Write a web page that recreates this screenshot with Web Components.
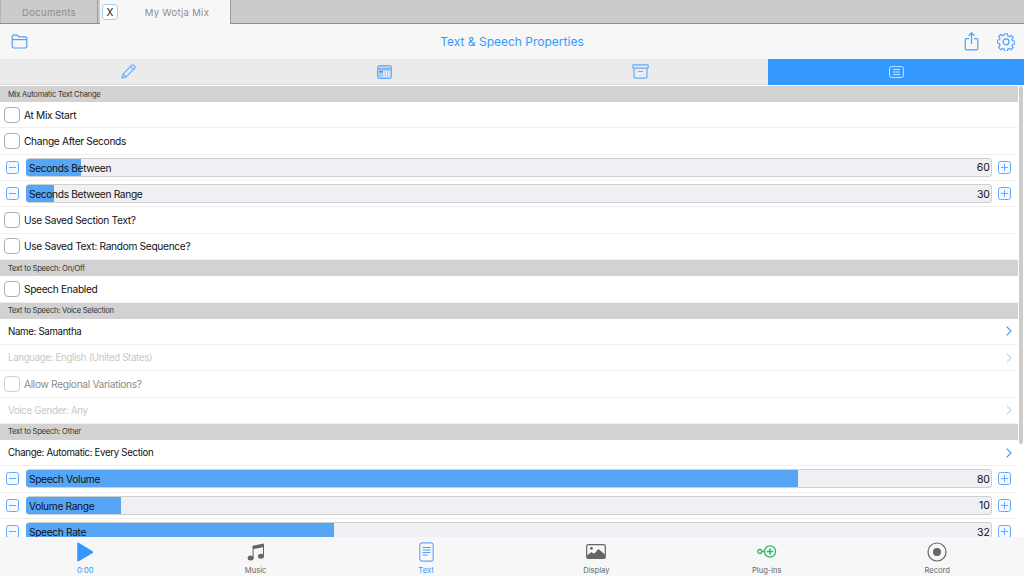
<!DOCTYPE html>
<html>
<head>
<meta charset="utf-8">
<title>Text & Speech Properties</title>
<style>
html,body{
    margin: 0;
    padding: 0;
    height: 100%;
    overflow: hidden;
    font-family: Inter, "Liberation Sans", sans-serif;
    background: #fff;
}
wm-app{
    height: 576px;
}
</style>
</head>
<body>
<wm-app>
    <wm-tabs slot="top"></wm-tabs>
    <wm-toolbar slot="top" title="Text &amp; Speech Properties"></wm-toolbar>
    <wm-segments slot="top"></wm-segments>

    <wm-section>Mix Automatic Text Change</wm-section>
    <wm-check>At Mix Start</wm-check>
    <wm-check>Change After Seconds</wm-check>
    <wm-slider label="Seconds Between" value="60" fill="55"></wm-slider>
    <wm-slider label="Seconds Between Range" value="30" fill="28"></wm-slider>
    <wm-check>Use Saved Section Text?</wm-check>
    <wm-check>Use Saved Text: Random Sequence?</wm-check>
    <wm-section>Text to Speech: On/Off</wm-section>
    <wm-check>Speech Enabled</wm-check>
    <wm-section>Text to Speech: Voice Selection</wm-section>
    <wm-link>Name: Samantha</wm-link>
    <wm-link disabled>Language: English (United States)</wm-link>
    <wm-check disabled>Allow Regional Variations?</wm-check>
    <wm-link disabled>Voice Gender: Any</wm-link>
    <wm-section>Text to Speech: Other</wm-section>
    <wm-link>Change: Automatic: Every Section</wm-link>
    <wm-slider label="Speech Volume" value="80" fill="772"></wm-slider>
    <wm-slider label="Volume Range" value="10" fill="95"></wm-slider>
    <wm-slider label="Speech Rate" value="32" fill="308"></wm-slider>

    <wm-bottom-bar slot="bottom">
        <wm-bottom-item label="0:00" active>
            <svg width="18" height="20" viewBox="0 0 18 20"><path d="M1.2 1.6v16.8c0 .9.8 1.3 1.5.9l14-8.4c.7-.4.7-1.3 0-1.7l-14-8.5C2 .3 1.2.7 1.2 1.6z" fill="#3399ff"/></svg>
        </wm-bottom-item>
        <wm-bottom-item label="Music">
            <svg width="20" height="20" viewBox="0 0 20 20" fill="#666"><ellipse cx="4.6" cy="16" rx="3" ry="2.5"/><ellipse cx="15" cy="14.2" rx="3" ry="2.5"/><path d="M6.6 16V4.2L18 2v12.200h-1V5.200L7.600 7.100V16z"/><path d="M6.600 3.800 18 1.600V3.600L6.600 5.800z"/></svg>
        </wm-bottom-item>
        <wm-bottom-item label="Text" active>
            <svg width="15" height="20" viewBox="0 0 15 20" fill="none"><rect x=".8" y=".8" width="13.4" height="18.4" rx="2.4" stroke="#66aaff" stroke-width="1.2"/><path d="M3.5 5.5h8M3.5 8h8M3.5 10.5h8M3.500 13h5" stroke="#4d9fff" stroke-width="1.1"/></svg>
        </wm-bottom-item>
        <wm-bottom-item label="Display">
            <svg width="20" height="15" viewBox="0 0 20 15" fill="none"><rect x=".7" y=".7" width="18.6" height="13.6" rx="1.4" stroke="#666" stroke-width="1.2"/><circle cx="5.4" cy="4.4" r="1.4" fill="#666"/><path d="M1 14v-2.5L5.5 8l2.5 1.8L12.5 5 19 10.5V14z" fill="#666"/></svg>
        </wm-bottom-item>
        <wm-bottom-item label="Plug-ins">
            <svg width="20" height="13" viewBox="0 0 20 13" fill="none" stroke="#2fb866" stroke-width="1.3"><circle cx="2.8" cy="6.5" r="2"/><path d="M4.8 6.5h2.2"/><circle cx="13" cy="6.5" r="5.6"/><path d="M13 3.2v6.6M9.7 6.5h6.6" stroke-width="1.5"/></svg>
        </wm-bottom-item>
        <wm-bottom-item label="Record">
            <svg width="20" height="20" viewBox="0 0 20 20" fill="none"><circle cx="10" cy="10" r="9" stroke="#666" stroke-width="1.2"/><circle cx="10" cy="10" r="4" fill="#666"/></svg>
        </wm-bottom-item>
    </wm-bottom-bar>
</wm-app>

<script>
const blue = '#3399ff';

class WmApp extends HTMLElement{
    constructor(){
        super();
        this.attachShadow({mode: 'open'}).innerHTML = `
<style>
:host{
    display: flex;
    flex-direction: column;
    width: 1024px;
    overflow: hidden;
}
.list{
    flex: 1;
    min-height: 0;
    overflow: hidden;
    position: relative;
    padding-top: 1px;
}
.bar{
    position: absolute;
    right: 1px;
    top: 1px;
    width: 4px;
    height: 358px;
    border-radius: 2px;
    background: #cccccc;
}
</style>
<slot name="top"></slot>
<div class="list"><slot></slot><div class="bar"></div></div>
<slot name="bottom"></slot>`;
    }
}

class WmTabs extends HTMLElement{
    constructor(){
        super();
        this.attachShadow({mode: 'open'}).innerHTML = `
<style>
:host{
    display: flex;
    height: 24px;
    box-sizing: border-box;
    background: #cbcbcb;
    border-bottom: 1px solid #8e8e8e;
    font-size: 9.5px;
    letter-spacing: .3px;
    color: #8d8d8d;
}
.doc{
    width: 98px;
    display: flex;
    align-items: center;
    justify-content: center;
    border-right: 1px solid #9a9a9a;
    box-sizing: border-box;
    border-left: 1px solid #b5b5b5;
    padding-top: 1px;
}
.cur{
    width: 131px;
    height: 24px;
    margin-left: 2px;
    background: #f7f7f7;
    border-right: 1px solid #9a9a9a;
    display: flex;
    align-items: center;
    box-sizing: border-box;
    padding-left: 2px;
}
.x{
    width: 16px;
    height: 16px;
    box-sizing: border-box;
    border: 1px solid #a9cff7;
    border-radius: 3px;
    background: #fff;
    color: #111;
    font-size: 10px;
    letter-spacing: 0;
    display: flex;
    align-items: center;
    justify-content: center;
}
.name{
    flex: 1;
    text-align: center;
    padding-left: 6px;
}
</style>
<div class="doc">Documents</div>
<div class="cur"><div class="x">X</div><div class="name">My Wotja Mix</div></div>`;
    }
}

class WmToolbar extends HTMLElement{
    constructor(){
        super();
        this.attachShadow({mode: 'open'}).innerHTML = `
<style>
:host{
    display: flex;
    align-items: center;
    justify-content: space-between;
    height: 35px;
    background: #f7f7f7;
    padding: 0 9px 0 11px;
    color: ${blue};
}
.title{
    font-size: 12px;
    position: absolute;
    left: 0;
    right: 0;
    text-align: center;
}
.right{
    display: flex;
    align-items: center;
    gap: 18px;
}
svg{
    display: block;
}
</style>
<svg width="17" height="15" viewBox="0 0 17 15" fill="none" stroke="#4d9fff" stroke-width="1.2"><path d="M1.2 12.6V2.6c0-.8.6-1.400 1.400-1.400h3.200c.5 0 .9.200 1.200.6l.8 1h6.600c.8 0 1.400.6 1.400 1.400v8.400c0 .8-.6 1.400-1.400 1.400H2.600c-.8 0-1.400-.6-1.400-1.400z"/><path d="M1.200 5.600h14.600"/></svg>
<div class="title"></div>
<div class="right">
    <svg width="15" height="19" viewBox="0 0 15 19" fill="none" stroke="#4d9fff" stroke-width="1.2"><path d="M5 6.6H2.400c-.7 0-1.200.5-1.200 1.200v8.800c0 .7.5 1.200 1.200 1.200h10.200c.7 0 1.200-.5 1.200-1.200V7.800c0-.7-.5-1.200-1.200-1.200H10"/><path d="M7.500 12V1M4.600 3.700 7.500.9l2.900 2.800"/></svg>
    <svg width="18" height="18" viewBox="0 0 18 18" fill="none" stroke="#4d9fff" stroke-width="1.2" stroke-linejoin="round"><path d="M7.600 1h2.800l.4 2.200 1.500.7 1.900-1.200 2 2-1.200 1.900.6 1.500 2.200.5v2.800l-2.200.4-.6 1.500 1.200 1.900-2 2-1.900-1.200-1.500.6-.4 2.200H7.600l-.4-2.200-1.500-.6-1.900 1.200-2-2L3 12.400l-.6-1.500L.2 10.400V7.600l2.200-.5L3 5.600 1.800 3.700l2-2 1.900 1.200 1.500-.7z" transform="translate(0 -.2) scale(1 .98)"/><circle cx="9" cy="8.800" r="3"/></svg>
</div>`;
        this.shadowRoot.querySelector('.title').textContent = this.getAttribute('title');
    }
}

class WmSegments extends HTMLElement{
    constructor(){
        super();
        this.attachShadow({mode: 'open'}).innerHTML = `
<style>
:host{
    display: grid;
    grid-template-columns: repeat(4, 1fr);
    height: 26px;
    box-sizing: border-box;
    background: #ebebeb;
    border-bottom: 1px solid #dcdcdc;
}
div{
    display: flex;
    align-items: center;
    justify-content: center;
}
.on{
    background: ${blue};
    margin-bottom: -1px;
}
</style>
<div><svg width="15" height="15" viewBox="0 0 15 15" fill="none" stroke="#66aaff" stroke-width="1.1" stroke-linejoin="round"><path d="M1 14l1-4L10.800 1.200a1.200 1.200 0 0 1 1.700 0l1.300 1.300a1.200 1.200 0 0 1 0 1.700L5 13z"/><path d="M9.500 2.600l3 3M2 10l3 3"/></svg></div>
<div><svg width="15" height="14" viewBox="0 0 15 14"><rect x=".5" y=".5" width="14" height="13" rx="1.800" fill="#a9cdf5" stroke="#66aaff"/><path d="M1 4h13" stroke="#66aaff" stroke-width="1.200"/><rect x="2.500" y="6" width="3" height="1.500" fill="#3388ee"/><path d="M7 6v6M9.500 6v6M12 6v6" stroke="#fff" stroke-width=".9"/></svg></div>
<div><svg width="17" height="15" viewBox="0 0 17 15" fill="none" stroke="#66aaff" stroke-width="1.200"><rect x=".8" y=".8" width="15.400" height="3.400" rx=".6"/><path d="M2 4.200v8.600c0 .8.600 1.400 1.400 1.400h10.200c.8 0 1.400-.6 1.400-1.400V4.200M6.300 7.500h4.400"/></svg></div>
<div class="on"><svg width="15" height="12" viewBox="0 0 15 12" fill="none" stroke="#cfe6ff" stroke-width="1"><rect x=".6" y=".6" width="13.800" height="10.800" rx="1.800"/><path d="M4 3.500h7M4 6h7M4 8.500h7"/></svg></div>`;
    }
}

class WmSection extends HTMLElement{
    constructor(){
        super();
        this.attachShadow({mode: 'open'}).innerHTML = `
<style>
:host{
    display: flex;
    align-items: center;
    height: 16px;
    width: 1018px;
    box-sizing: border-box;
    padding-left: 8px;
    background: #d2d2d2;
    font-size: 7.6px;
    letter-spacing: -.25px;
    color: #333;
}
</style>
<slot></slot>`;
    }
}

// rows share height and the thin rule at the bottom
const row_css = `
:host{
    display: flex;
    align-items: center;
    height: 26.36px;
    width: 1018px;
    box-sizing: border-box;
    border-bottom: 1px solid #f0f0f0;
    font-size: 10.2px;
    letter-spacing: -.33px;
    color: #111;
    background: #fff;
}`;

class WmCheck extends HTMLElement{
    constructor(){
        super();
        this.attachShadow({mode: 'open'}).innerHTML = `
<style>
${row_css}
:host{
    padding-left: 4px;
    gap: 4px;
}
.box{
    width: 16px;
    height: 16px;
    box-sizing: border-box;
    border: 1px solid #aeaeae;
    border-radius: 4px;
    background: #fff;
}
:host([disabled]){
    color: #8c8c8c;
}
:host([disabled]) .box{
    border-color: #d0d0d0;
}
</style>
<div class="box"></div><slot></slot>`;
    }
}

class WmLink extends HTMLElement{
    constructor(){
        super();
        this.attachShadow({mode: 'open'}).innerHTML = `
<style>
${row_css}
:host{
    padding: 0 6px 0 8px;
    justify-content: space-between;
    font-size: 9.7px;
}
:host([disabled]){
    color: #c8c8c8;
}
:host([disabled]) svg{
    opacity: .35;
}
svg{
    display: block;
}
</style>
<slot></slot>
<svg width="6" height="10" viewBox="0 0 6 10" fill="none" stroke="#3399ff" stroke-width="1.100"><path d="M.7.7 5 5 .7 9.300"/></svg>`;
    }
}

class WmSlider extends HTMLElement{
    constructor(){
        super();
        this.attachShadow({mode: 'open'}).innerHTML = `
<style>
${row_css}
:host{
    padding-left: 6px;
}
.btn{
    flex: none;
    width: 13px;
    height: 13px;
    box-sizing: border-box;
    border: 1px solid #66aaff;
    border-radius: 2.500px;
    display: flex;
    align-items: center;
    justify-content: center;
    background: #f4f9ff;
}
.btn svg{
    display: block;
}
.track{
    flex: none;
    width: 966px;
    height: 19px;
    margin: 0 6px 0 7px;
    box-sizing: border-box;
    border: 1px solid #d0d0d0;
    border-radius: 3px;
    background: #efeff4;
    position: relative;
    display: flex;
    align-items: center;
    justify-content: space-between;
    padding: .6px 1px 0 2px;
}
.fill{
    position: absolute;
    left: -1px;
    top: 0;
    bottom: 0;
    border-radius: 3px 0 0 3px;
    background: #55a6f7;
}
span{
    position: relative;
}
.val{
    letter-spacing: 0;
    font-size: 10.5px;
}
</style>
<div class="btn"><svg width="7" height="7" viewBox="0 0 7 7"><path d="M0 3.500h7" stroke="#66aaff" stroke-width="1"/></svg></div>
<div class="track"><div class="fill"></div><span class="lab"></span><span class="val"></span></div>
<div class="btn"><svg width="7" height="7" viewBox="0 0 7 7"><path d="M0 3.500h7M3.500 0v7" stroke="#66aaff" stroke-width="1"/></svg></div>`;
        this.shadowRoot.querySelector('.lab').textContent = this.getAttribute('label');
        this.shadowRoot.querySelector('.val').textContent = this.getAttribute('value');
        this.shadowRoot.querySelector('.fill').style.width = this.getAttribute('fill') + 'px';
    }
}

class WmBottomBar extends HTMLElement{
    constructor(){
        super();
        this.attachShadow({mode: 'open'}).innerHTML = `
<style>
:host{
    display: grid;
    grid-template-columns: repeat(6, 1fr);
    height: 39px;
    box-sizing: border-box;
    padding-right: 1.6px;
    background: #f7f7f7;
    position: relative;
}
</style>
<slot></slot>`;
    }
}

class WmBottomItem extends HTMLElement{
    constructor(){
        super();
        this.attachShadow({mode: 'open'}).innerHTML = `
<style>
:host{
    display: flex;
    flex-direction: column;
    align-items: center;
    font-size: 7.6px;
    color: #666;
}
:host([active]){
    color: ${blue};
}
.ico{
    height: 28px;
    display: flex;
    align-items: center;
    justify-content: center;
    padding-top: 1px;
    margin-bottom: 1px;
    box-sizing: border-box;
}
</style>
<div class="ico"><slot></slot></div>
<div class="lab"></div>`;
        this.shadowRoot.querySelector('.lab').textContent = this.getAttribute('label');
    }
}

window.customElements.define('wm-app', WmApp);
window.customElements.define('wm-tabs', WmTabs);
window.customElements.define('wm-toolbar', WmToolbar);
window.customElements.define('wm-segments', WmSegments);
window.customElements.define('wm-section', WmSection);
window.customElements.define('wm-check', WmCheck);
window.customElements.define('wm-link', WmLink);
window.customElements.define('wm-slider', WmSlider);
window.customElements.define('wm-bottom-bar', WmBottomBar);
window.customElements.define('wm-bottom-item', WmBottomItem);
</script>
</body>
</html>
